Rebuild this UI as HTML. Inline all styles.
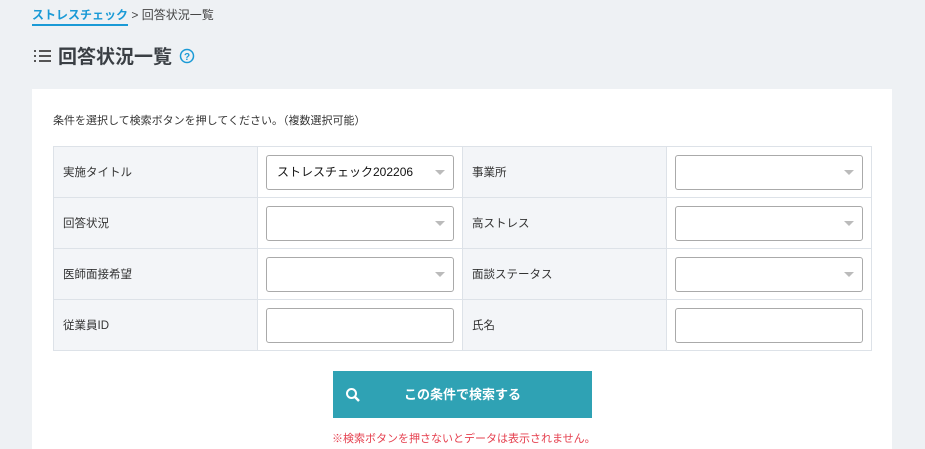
<!DOCTYPE html>
<html><head><meta charset="utf-8"><style>
html,body{margin:0;width:925px;height:449px;overflow:hidden}
body{background:#eef1f4;font-family:"Liberation Sans","Noto Sans CJK JP",sans-serif;color:#333;position:relative}
.bc{position:absolute;left:32px;top:6px;font-size:12px;color:#444}
.bc a{color:#1a9ad6;font-weight:bold;text-decoration:none;border-bottom:2px solid #1a9ad6;padding-bottom:2px}
h1{position:absolute;left:34px;top:42px;margin:0;font-size:19px;font-weight:bold;color:#3a3f44;display:flex;align-items:center}
.card{position:absolute;left:32px;top:89px;width:860px;height:360px;background:#fff}
.desc{position:absolute;left:21px;top:23px;font-size:11px;color:#333}
table{position:absolute;left:21px;top:57px;border-collapse:collapse}
td{border:1px solid #dde2e8;height:50px;padding:0;font-size:11.5px}
td.l{background:#f3f5f8;width:194px;padding-left:9px}
td.i{width:204px}
.sel{margin-left:8px;width:188px;height:35px;border:1px solid #aaa;border-radius:3px;box-sizing:border-box;position:relative;font-size:12px;line-height:33px;padding-left:10px;color:#111}
.sel.s:after{content:"";position:absolute;right:8px;top:14px;border:5px solid transparent;border-top:5px solid #bbb}
.btn{position:absolute;left:301px;top:282px;width:259px;height:47px;background:#2fa2b4;color:#fff;font-weight:bold;font-size:13px;line-height:47px;text-align:center}
.note{position:absolute;left:300px;top:341px;font-size:11px;color:#e5404f}
</style></head><body>
<div class="bc"><a>ストレスチェック</a> &gt; 回答状況一覧</div>
<h1><svg width="18" height="16" viewBox="0 0 18 16" style="margin-right:6px"><g fill="#555"><rect x="0" y="2" width="2" height="2"/><rect x="0" y="7" width="2" height="2"/><rect x="0" y="12" width="2" height="2"/><rect x="5" y="2" width="12" height="2"/><rect x="5" y="7" width="12" height="2"/><rect x="5" y="12" width="12" height="2"/></g></svg>回答状況一覧<svg width="16" height="16" viewBox="0 0 16 16" style="margin-left:7px"><circle cx="8" cy="8" r="6.5" fill="none" stroke="#1a9ad6" stroke-width="1.5"/><text x="8" y="12" text-anchor="middle" font-size="10" font-weight="bold" fill="#1a9ad6" font-family="Liberation Sans">?</text></svg></h1>
<div class="card">
<div class="desc">条件を選択して検索ボタンを押してください。（複数選択可能）</div>
<table>
<tr><td class="l">実施タイトル</td><td class="i"><div class="sel s">ストレスチェック202206</div></td><td class="l">事業所</td><td class="i"><div class="sel s"></div></td></tr>
<tr><td class="l">回答状況</td><td class="i"><div class="sel s"></div></td><td class="l">高ストレス</td><td class="i"><div class="sel s"></div></td></tr>
<tr><td class="l">医師面接希望</td><td class="i"><div class="sel s"></div></td><td class="l">面談ステータス</td><td class="i"><div class="sel s"></div></td></tr>
<tr><td class="l">従業員ID</td><td class="i"><div class="sel"></div></td><td class="l">氏名</td><td class="i"><div class="sel"></div></td></tr>
</table>
<div class="btn"><svg width="16" height="16" viewBox="0 0 16 16" style="position:absolute;left:12px;top:16px"><circle cx="6.5" cy="6.5" r="4.5" fill="none" stroke="#fff" stroke-width="2"/><path d="M10 10l4 4" stroke="#fff" stroke-width="2.5"/></svg>この条件で検索する</div>
<div class="note">※検索ボタンを押さないとデータは表示されません。</div>
</div>
</body></html>
